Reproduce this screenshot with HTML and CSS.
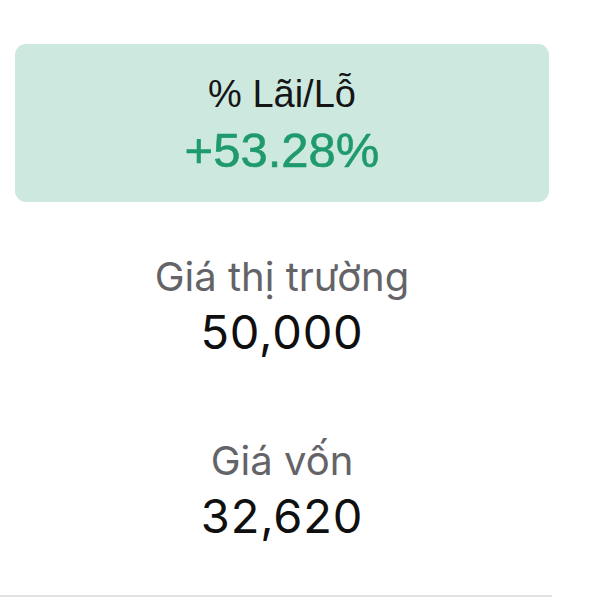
FILE: index.html
```html
<!DOCTYPE html>
<html lang="vi">
<head>
<meta charset="utf-8">
<link rel="stylesheet" href="styles.css">
</head>
<body>
<div class="wrap">
  <div class="card">
    <div class="card-title">% Lãi/Lỗ</div>
    <div class="card-value">+53.28%</div>
  </div>
  <div class="stat first">
    <div class="label">Giá thị trường</div>
    <div class="value">50,000</div>
  </div>
  <div class="stat second">
    <div class="label">Giá vốn</div>
    <div class="value">32,620</div>
  </div>
  <div class="divider"></div>
</div>
</body>
</html>
```
FILE: styles.css
```css
html, body {
  margin: 0;
  padding: 0;
  background: #ffffff;
}
body {
  font-family: Inter, "Liberation Sans", sans-serif;
}
.wrap {
  width: 534px;
  padding-left: 15px;
  padding-top: 44px;
  display: flex;
  flex-direction: column;
  align-items: stretch;
}
.card {
  background: #cde9df;
  border-radius: 11px;
  height: 158px;
  box-sizing: border-box;
  padding-top: 30px;
  display: flex;
  flex-direction: column;
  align-items: center;
}
.card-title {
  font-family: "Liberation Sans", Arial, sans-serif;
  font-size: 38px;
  line-height: 40px;
  color: #151515;
}
.card-value {
  font-family: "Liberation Sans", Arial, sans-serif;
  font-size: 49px;
  font-weight: 400;
  -webkit-text-stroke: 0.6px #1f9a6d;
  line-height: 52px;
  margin-top: 10px;
  color: #1f9a6d;
}
.stat {
  display: flex;
  flex-direction: column;
  align-items: center;
}
.stat.first { margin-top: 51px; }
.stat.second { margin-top: 79px; }
.label {
  font-size: 40px;
  line-height: 48px;
  color: #636368;
}
.value {
  font-size: 47px;
  line-height: 52px;
  letter-spacing: 0.8px;
  margin-top: 5px;
  color: #0f0f0f;
}
.divider {
  margin-top: 53px;
  margin-left: -15px;
  width: 552px;
  height: 2px;
  background: #e2e2e2;
}
```
